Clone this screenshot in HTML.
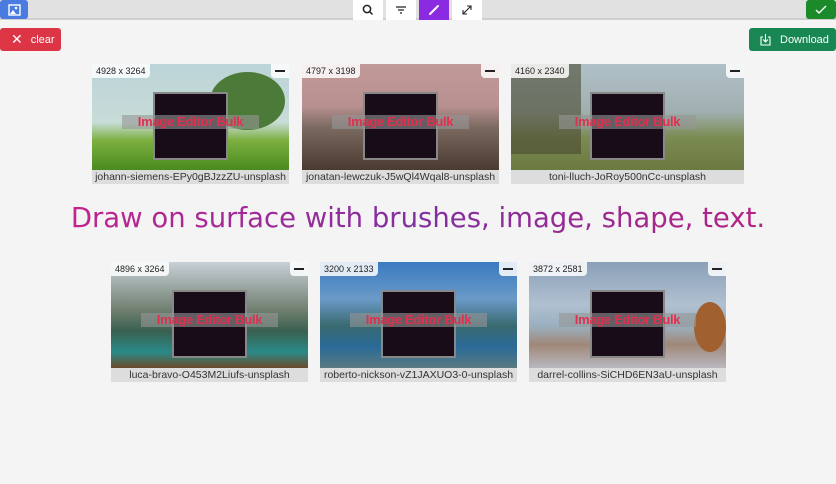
<!DOCTYPE html>
<html><head><meta charset="utf-8"><style>
*{box-sizing:border-box;margin:0;padding:0}
body{width:836px;height:484px;background:#f4f4f4;font-family:"Liberation Sans",sans-serif;position:relative;overflow:hidden}
.bar{position:absolute;left:0;top:0;width:836px;height:20px;background:#e1e1e1;border-bottom:2px solid #cfcfcf}
.tb{position:absolute;top:0;height:20px;width:30px;background:#fff;display:flex;align-items:center;justify-content:center}
.btn{position:absolute;top:28px;height:23px;border-radius:3px;color:#fff;font-size:11px;display:flex;align-items:center}
.card{position:absolute;width:197px}
.img{position:relative;height:106px;overflow:hidden}
.dim{position:absolute;left:0;top:0;background:rgba(255,255,255,.85);font-size:9px;color:#222;padding:2px 4px;border-bottom-right-radius:4px}
.min{position:absolute;right:0;top:0;width:18px;height:14px;background:rgba(255,255,255,.85);border-bottom-left-radius:4px}
.min:after{content:"";position:absolute;left:4px;top:6px;width:10px;height:1.5px;background:#222}
.sq{position:absolute;left:61px;top:28px;width:75px;height:68px;background:#180c18;border:2px solid #888}
.band{position:absolute;left:30px;top:51px;width:137px;height:14px;background:rgba(150,150,150,.6);color:#e0304f;font-size:13px;font-weight:bold;text-align:center;line-height:14px;white-space:nowrap;letter-spacing:-.3px}
.cap{height:14px;background:#ddd;font-size:10.5px;color:#333;text-align:center;line-height:14px;white-space:nowrap}
.h{position:absolute;top:202px;left:0;width:836px;text-align:center;font-family:"DejaVu Sans",sans-serif;font-size:27.5px;background:linear-gradient(90deg,#d0208a,#8030a0 50%,#c02080);-webkit-background-clip:text;color:transparent}
</style></head><body>
<div class="bar"></div>
<div style="position:absolute;left:0;top:0;width:28px;height:19px;background:#4a7be0;border-radius:3px;display:flex;align-items:center;justify-content:center"><svg width="13" height="12"><rect x="1" y="1" width="11" height="10" fill="none" stroke="#fff" stroke-width="1.4"/><circle cx="8" cy="4" r="1.3" fill="#fff"/><path d="M2 10l3-4 3 4z" fill="#fff"/></svg></div>
<div class="tb" style="left:353px"><svg width="12" height="12"><circle cx="5" cy="5" r="3.6" fill="none" stroke="#222" stroke-width="1.5"/><path d="M7.5 7.5l3 3" stroke="#222" stroke-width="1.5"/></svg></div>
<div class="tb" style="left:386px"><svg width="12" height="10"><path d="M1 2h10M3 5h6M5 8h2" stroke="#222" stroke-width="1.3"/></svg></div>
<div class="tb" style="left:419px;background:#8a2be2"><svg width="12" height="12"><path d="M2 10l8-8" stroke="#fff" stroke-width="2" stroke-linecap="round"/></svg></div>
<div class="tb" style="left:452px"><svg width="12" height="12"><path d="M2 10l8-8M6 2h4v4M2 6v4h4" stroke="#222" stroke-width="1.1" fill="none"/></svg></div>
<div style="position:absolute;left:806px;top:0;width:30px;height:19px;background:#1a8a2a;border-radius:3px;display:flex;align-items:center;justify-content:center"><svg width="12" height="10"><path d="M1 5l3 3 7-7" stroke="#fff" stroke-width="1.4" fill="none"/></svg></div>
<div class="btn" style="left:0;width:61px;background:#dc3545"><span style="margin-left:11px;font-size:14px">✕</span><span style="margin-left:8px">clear</span></div>
<div class="btn" style="left:749px;width:87px;background:#198754"><svg style="margin-left:10px" width="13" height="13"><path d="M4 4H2v8h9V4H9M6.5 1v8M4 6.5l2.5 2.5 2.5-2.5" stroke="#fff" stroke-width="1.1" fill="none"/></svg><span style="margin-left:8px">Download</span></div>

<div class="card" style="left:92px;top:64px"><div class="img" style="background:linear-gradient(180deg,#bcd4d8 0%,#c8dcd8 55%,#7cb040 72%,#4a8a20 100%)"><div style="position:absolute;left:118px;top:8px;width:75px;height:58px;border-radius:50%;background:#4c7a38"></div><div class="sq"></div><div class="band">Image Editor Bulk</div><div class="dim">4928 x 3264</div><div class="min"></div></div><div class="cap">johann-siemens-EPy0gBJzzZU-unsplash</div></div>
<div class="card" style="left:302px;top:64px"><div class="img" style="background:linear-gradient(180deg,#c09a98 0%,#b89090 40%,#7a6a60 60%,#4a3a30 100%)"><div class="sq"></div><div class="band">Image Editor Bulk</div><div class="dim">4797 x 3198</div><div class="min"></div></div><div class="cap">jonatan-lewczuk-J5wQl4Wqal8-unsplash</div></div>
<div class="card" style="left:511px;top:64px;width:233px"><div class="img" style="background:linear-gradient(180deg,#b0c0c8 0%,#a0b0b0 45%,#7a8a50 70%,#6a7a40 100%)"><div style="position:absolute;left:0;top:0;width:70px;height:90px;background:#4a4a30;opacity:.6"></div><div class="sq" style="left:79px"></div><div class="band" style="left:48px">Image Editor Bulk</div><div class="dim">4160 x 2340</div><div class="min"></div></div><div class="cap">toni-lluch-JoRoy500nCc-unsplash</div></div>

<div class="h">Draw on surface with brushes, image, shape, text.</div>

<div class="card" style="left:111px;top:262px"><div class="img" style="background:linear-gradient(180deg,#c8d0d8 0%,#708070 45%,#3a6050 65%,#2a8a88 85%,#6a4a2a 100%)"><div class="sq"></div><div class="band">Image Editor Bulk</div><div class="dim">4896 x 3264</div><div class="min"></div></div><div class="cap">luca-bravo-O453M2Liufs-unsplash</div></div>
<div class="card" style="left:320px;top:262px"><div class="img" style="background:linear-gradient(180deg,#3a7ac0 0%,#6a9ac8 35%,#3a6a70 60%,#2a6a98 80%,#5a7a80 100%)"><div class="sq"></div><div class="band">Image Editor Bulk</div><div class="dim">3200 x 2133</div><div class="min"></div></div><div class="cap">roberto-nickson-vZ1JAXUO3-0-unsplash</div></div>
<div class="card" style="left:529px;top:262px"><div class="img" style="background:linear-gradient(180deg,#8aa0b8 0%,#b0c0d0 40%,#9ab0c0 60%,#a08878 78%,#b8b8c0 100%)"><div style="position:absolute;right:0;top:40px;width:32px;height:50px;border-radius:50%;background:#a06030"></div><div class="sq"></div><div class="band">Image Editor Bulk</div><div class="dim">3872 x 2581</div><div class="min"></div></div><div class="cap">darrel-collins-SiCHD6EN3aU-unsplash</div></div>
</body></html>
